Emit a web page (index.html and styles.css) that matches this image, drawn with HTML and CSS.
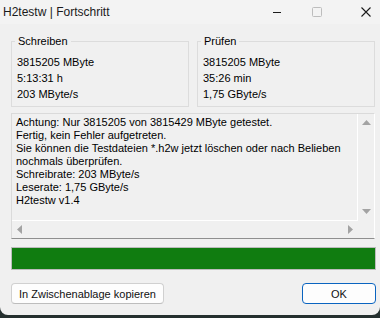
FILE: index.html
```html
<!DOCTYPE html>
<html lang="de">
<head>
<meta charset="utf-8">
<title>H2testw | Fortschritt</title>
<link rel="stylesheet" href="styles.css">
</head>
<body>
<div class="window">
  <div class="titlebar">
    <span class="title">H2testw | Fortschritt</span>
    <div class="controls">
      <svg class="ctl-min" width="8" height="1" viewBox="0 0 8 1"><rect x="0" y="0" width="8" height="1" fill="#1b1b1b"/></svg>
      <svg class="ctl-max" width="10" height="10" viewBox="0 0 10 10"><rect x="0.5" y="0.5" width="9" height="9" rx="1" fill="none" stroke="#bdbdbd" stroke-width="1"/></svg>
      <svg class="ctl-close" width="10" height="10" viewBox="0 0 10 10"><path d="M0.5 0.5 L9.5 9.5 M9.5 0.5 L0.5 9.5" stroke="#1b1b1b" stroke-width="1.1" fill="none"/></svg>
    </div>
  </div>
  <div class="content">
    <div class="groups">
      <fieldset class="group">
        <legend>Schreiben</legend>
        <div class="line">3815205 MByte</div>
        <div class="line">5:13:31 h</div>
        <div class="line">203 MByte/s</div>
      </fieldset>
      <fieldset class="group">
        <legend>Prüfen</legend>
        <div class="line">3815205 MByte</div>
        <div class="line">35:26 min</div>
        <div class="line">1,75 GByte/s</div>
      </fieldset>
    </div>
    <div class="log">
      <div class="log-text">
        <div>Achtung: Nur 3815205 von 3815429 MByte getestet.</div>
        <div>Fertig, kein Fehler aufgetreten.</div>
        <div>Sie können die Testdateien *.h2w jetzt löschen oder nach Belieben</div>
        <div>nochmals überprüfen.</div>
        <div>Schreibrate: 203 MByte/s</div>
        <div>Leserate: 1,75 GByte/s</div>
        <div>H2testw v1.4</div>
      </div>
      <div class="vscroll">
        <svg width="9" height="5" viewBox="0 0 9 5"><polygon points="0,5 4.5,0 9,5" fill="#a3a3a3"/></svg>
        <svg width="9" height="5" viewBox="0 0 9 5"><polygon points="0,0 9,0 4.5,5" fill="#a3a3a3"/></svg>
      </div>
      <div class="hscroll">
        <svg width="5" height="9" viewBox="0 0 5 9"><polygon points="5,0 5,9 0,4.5" fill="#a3a3a3"/></svg>
        <svg width="5" height="9" viewBox="0 0 5 9"><polygon points="0,0 0,9 5,4.5" fill="#a3a3a3"/></svg>
      </div>
      <div class="corner"></div>
    </div>
    <div class="progress"><div class="fill" style="width:100%"></div></div>
    <div class="buttons">
      <button class="btn copy">In Zwischenablage kopieren</button>
      <button class="btn ok">OK</button>
    </div>
  </div>
</div>
</body>
</html>
```

FILE: styles.css
```css
html, body {
  margin: 0;
  padding: 0;
}
body {
  width: 380px;
  height: 318px;
  background: #25302f;
  overflow: hidden;
  font-family: "Liberation Sans", Arial, sans-serif;
}
.window {
  width: 380px;
  height: 315px;
  background: #f0f0f0;
  border-radius: 0 0 8px 8px;
  overflow: hidden;
  display: flex;
  flex-direction: column;
}
.titlebar {
  height: 24px;
  flex: none;
  background: #f3f3f3;
  display: flex;
  align-items: center;
  justify-content: space-between;
  padding-left: 3px;
}
.title {
  font-size: 12px;
  color: #1a1a1a;
  line-height: 14px;
  margin-top: -1px;
}
.controls {
  display: flex;
  align-items: center;
  padding-right: 9px;
}
.controls svg {
  display: block;
}
.ctl-max {
  margin-left: 31px;
  margin-top: -1px;
}
.ctl-close {
  margin-left: 39px;
  margin-top: -1px;
}
.content {
  flex: 1;
  display: flex;
  flex-direction: column;
  padding: 11px 5px 0 11px;
  font-size: 11px;
  color: #000;
}
.groups {
  display: grid;
  grid-template-columns: 178px 178px;
  column-gap: 8px;
}
.group {
  margin: 0;
  min-width: 0;
  border: 1px solid #dcdcdc;
  padding: 6px 5px 4px 5px;
}
.group legend {
  padding: 0 3px;
  margin-left: -2px;
  line-height: 13px;
  font-size: 11px;
}
.line {
  line-height: 16px;
  height: 16px;
  white-space: nowrap;
}
.log {
  margin-top: 6px;
  width: 364px;
  height: 126px;
  box-sizing: border-box;
  border-top: 1px solid #dadada;
  border-left: 1px solid #dadada;
  border-right: 1px solid #ffffff;
  border-bottom: 1px solid #8f8f8f;
  display: grid;
  grid-template-columns: 346px 16px;
  grid-template-rows: 107px 17px;
}
.log-text {
  border-right: 1px solid #fff;
  border-bottom: 1px solid #fff;
  padding: 2px 0 0 4px;
  line-height: 13px;
  white-space: nowrap;
  overflow: hidden;
}
.vscroll {
  display: flex;
  flex-direction: column;
  justify-content: space-between;
  align-items: center;
  padding: 6px 0 7px 0;
}
.vscroll svg, .hscroll svg {
  display: block;
}
.hscroll {
  display: flex;
  justify-content: space-between;
  align-items: center;
  padding: 0 5px 0 5px;
}
.progress {
  margin-top: 8px;
  width: 365px;
  height: 23px;
  box-sizing: border-box;
  border: 1px solid #bcbcbc;
  background: #e6e6e6;
}
.progress .fill {
  height: 100%;
  background: #107c10;
}
.buttons {
  margin-top: 13px;
  width: 365px;
  display: flex;
  justify-content: space-between;
}
.btn {
  height: 21px;
  box-sizing: border-box;
  margin: 0;
  padding: 0;
  font-family: "Liberation Sans", Arial, sans-serif;
  font-size: 11px;
  color: #111;
  background: #fdfdfd;
  border: 1px solid #d0d0d0;
  border-bottom-color: #bdbdbd;
  border-radius: 4px;
}
.copy {
  width: 153px;
}
.ok {
  width: 74px;
  border: 1px solid #0a64c0;
}
```
